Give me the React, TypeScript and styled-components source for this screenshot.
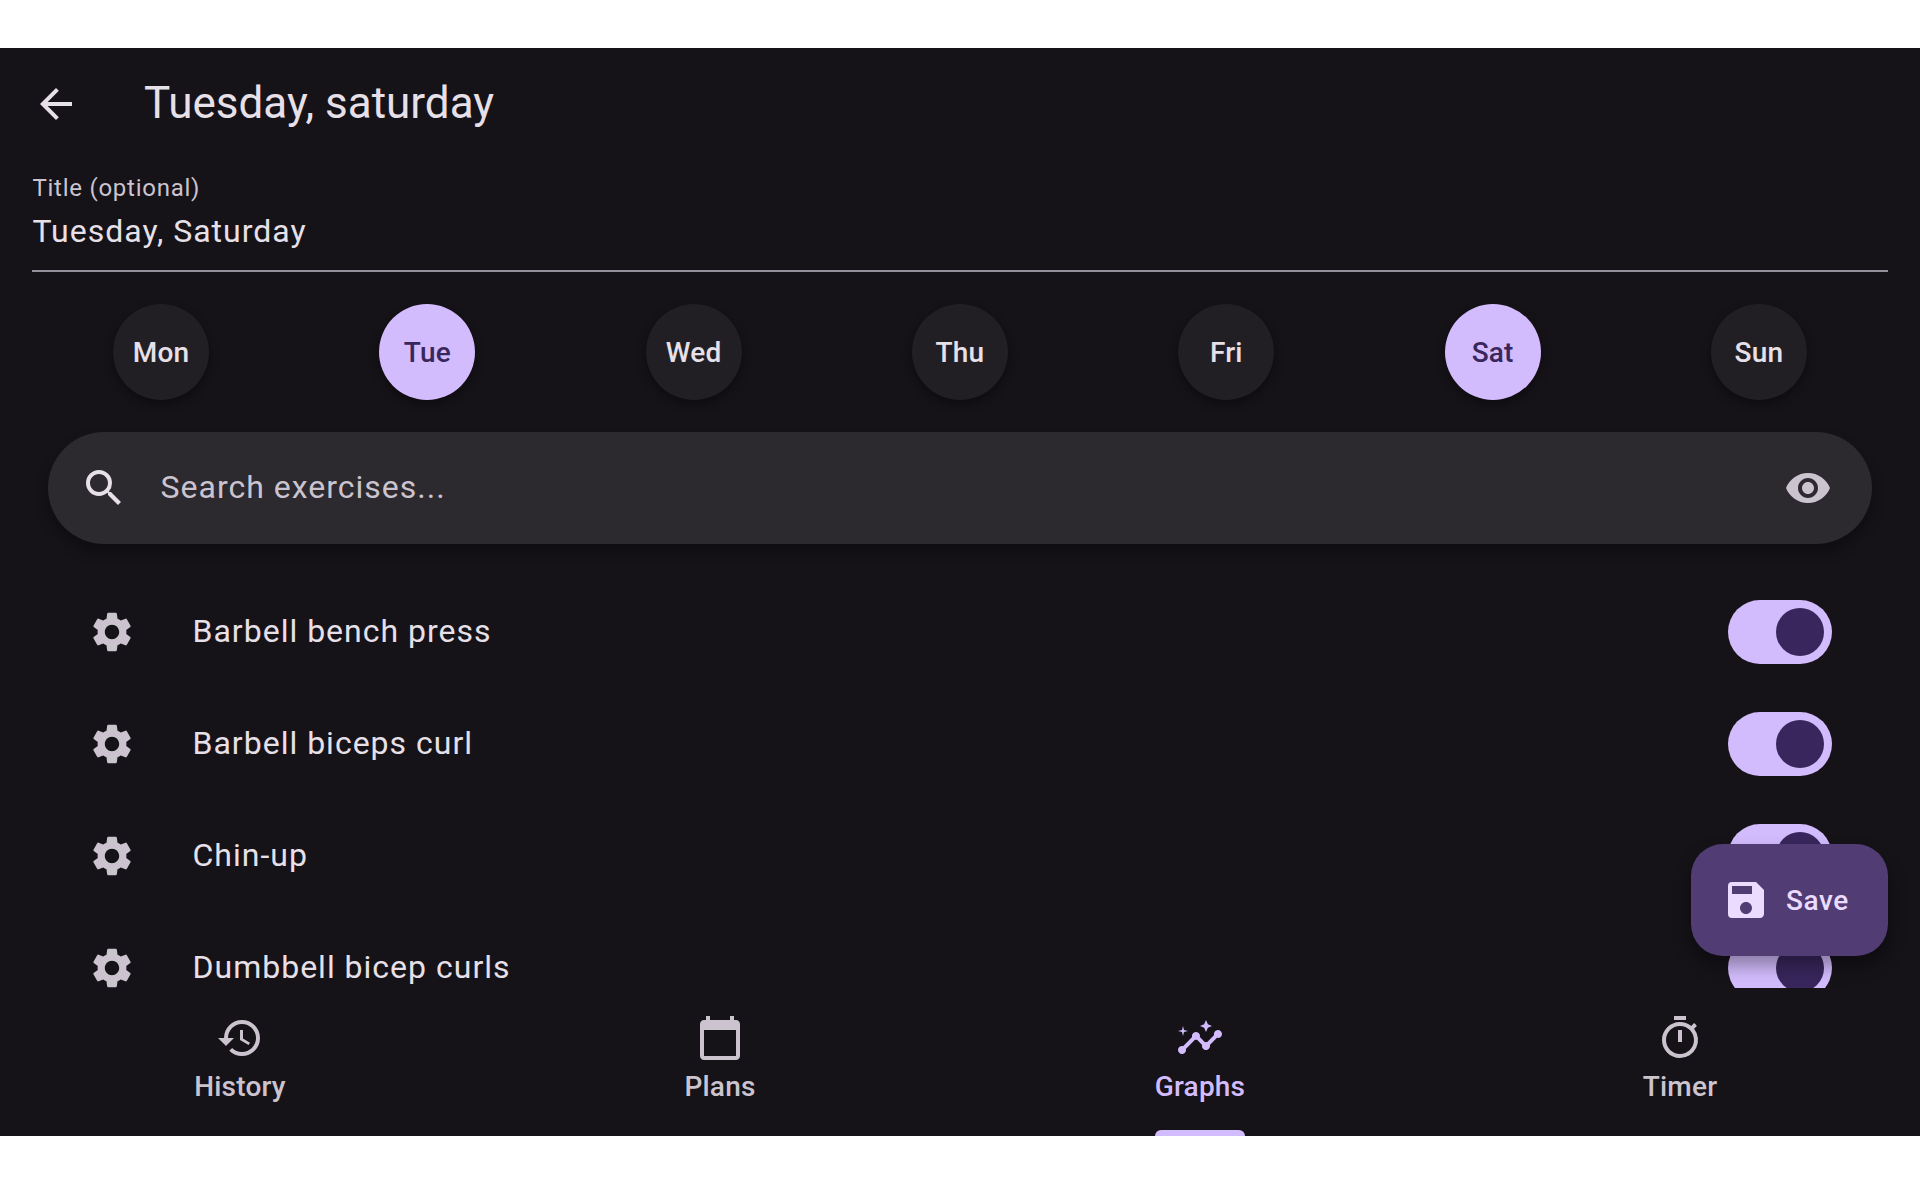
import React from "react";
import styled, { createGlobalStyle, css } from "styled-components";
import {
  MdArrowBack,
  MdCalendarToday,
  MdHistory,
  MdInsights,
  MdOutlineTimer,
  MdSave,
  MdSearch,
  MdSettings,
  MdVisibility,
} from "react-icons/md";

const c = {
  surface: "#151218",
  text: "#e7e0e8",
  muted: "#cbc4cf",
  outline: "#948f99",
  low: "#211f24",
  high: "#2c292f",
  primary: "#d3bcfd",
  onPrimary: "#38265c",
  container: "#513d73",
  onContainer: "#ebdcff",
};

const GlobalStyle = createGlobalStyle`
  * { box-sizing: border-box; }
  body { margin: 0; background: #fff; }
`;

const Page = styled.div`
  height: 1200px;
  padding: 48px 0 64px;
  background: #fff;
  font-family: Roboto, "Liberation Sans", sans-serif;
  color: ${c.text};
`;

const Screen = styled.div`
  display: flex;
  flex-direction: column;
  position: relative;
  height: 1088px;
  background: ${c.surface};
  overflow: hidden;

  svg {
    display: block;
    flex: none;
    width: 48px;
    height: 48px;
  }
`;

const AppBar = styled.header`
  display: flex;
  align-items: center;
  gap: 64px;
  height: 112px;
  padding: 0 32px;
`;

const Heading = styled.h1`
  margin: 0;
  padding-bottom: 2px;
  font-size: 44px;
  line-height: 56px;
  font-weight: 400;
`;

const Field = styled.label`
  display: flex;
  flex-direction: column;
  height: 112px;
  margin: 0 32px;
  padding-top: 14px;
  border-bottom: 2px solid ${c.outline};
`;

const FieldLabel = styled.span`
  padding-left: 0.4px;
  font-size: 24px;
  line-height: 28px;
  letter-spacing: 0.75px;
  color: ${c.muted};
`;

const FieldValue = styled.span`
  margin-top: 5px;
  padding-left: 0.5px;
  font-size: 32px;
  line-height: 48px;
  letter-spacing: 1px;
`;

const Days = styled.div`
  display: flex;
  justify-content: space-between;
  margin-top: 32px;
  padding: 0 113px;
`;

const Day = styled.button<{ $on?: boolean }>`
  width: 96px;
  height: 96px;
  padding: 2px 0 0;
  border: 0;
  border-radius: 50%;
  font: 500 28px/40px Roboto, "Liberation Sans", sans-serif;
  letter-spacing: 0.2px;
  background: ${(p) => (p.$on ? c.primary : c.low)};
  color: ${(p) => (p.$on ? c.onPrimary : c.text)};
  box-shadow: 0 4px 10px rgba(0, 0, 0, 0.34);
`;

const SearchBar = styled.div`
  display: flex;
  flex: none;
  align-items: center;
  height: 112px;
  margin: 32px 48px;
  padding: 0 40px 0 32px;
  border-radius: 56px;
  background: ${c.high};
  box-shadow: 0 8px 14px rgba(0, 0, 0, 0.28);
`;

const Placeholder = styled.span`
  flex: 1;
  margin-left: 32px;
  padding: 0 0 2px 0.5px;
  font-size: 32px;
  line-height: 48px;
  letter-spacing: 1px;
  color: ${c.muted};
`;

const List = styled.div`
  flex: 1;
  min-height: 0;
  overflow: hidden;
`;

const Row = styled.div`
  display: flex;
  align-items: center;
  height: 112px;
  padding: 0 88px;

  svg { color: ${c.muted}; }
`;

const RowText = styled.span`
  flex: 1;
  margin-left: 56px;
  padding: 0 0 2px 0.5px;
  font-size: 32px;
  line-height: 48px;
  letter-spacing: 1px;
`;

const Track = styled.span`
  display: flex;
  justify-content: flex-end;
  width: 104px;
  height: 64px;
  padding: 8px;
  border-radius: 32px;
  background: ${c.primary};
`;

const Thumb = styled.span`
  width: 48px;
  height: 48px;
  border-radius: 50%;
  background: ${c.onPrimary};
`;

const SaveButton = styled.button`
  display: flex;
  align-items: center;
  gap: 16px;
  position: absolute;
  right: 32px;
  bottom: 180px;
  width: 197px;
  height: 112px;
  padding: 0 0 0 31px;
  border: 0;
  border-radius: 32px;
  background: ${c.container};
  color: ${c.onContainer};
  font: 500 28px/40px Roboto, "Liberation Sans", sans-serif;
  letter-spacing: 0.6px;
  box-shadow: 0 10px 18px rgba(0, 0, 0, 0.34);
`;

const SaveLabel = styled.span`
  padding-top: 2px;
`;

const TabBar = styled.nav`
  display: flex;
  position: relative;
  flex: none;
  height: 148px;
  background: ${c.surface};
`;

const Tab = styled.div<{ $active?: boolean }>`
  display: flex;
  flex: 1;
  flex-direction: column;
  align-items: center;
  padding-top: 26px;
  color: ${(p) => (p.$active ? c.primary : c.muted)};
`;

const TabLabel = styled.span<{ $active?: boolean }>`
  height: 74px;
  padding-top: 5px;
  font-size: 28px;
  line-height: 40px;
  font-weight: 500;
  letter-spacing: 0.2px;
  ${(p) =>
    p.$active &&
    css`
      &::after {
        content: "";
        display: block;
        height: 6px;
        margin-top: 23px;
        border-radius: 6px 6px 0 0;
        background: ${c.primary};
      }
    `}
`;

const days = ["Mon", "Tue", "Wed", "Thu", "Fri", "Sat", "Sun"];
const selected = ["Tue", "Sat"];
const exercises = [
  "Barbell bench press",
  "Barbell biceps curl",
  "Chin-up",
  "Dumbbell bicep curls",
];
const tabs = [
  { label: "History", Icon: MdHistory },
  { label: "Plans", Icon: MdCalendarToday },
  { label: "Graphs", Icon: MdInsights, active: true },
  { label: "Timer", Icon: MdOutlineTimer },
];

export default function App() {
  return (
    <Page>
      <GlobalStyle />
      <Screen>
        <AppBar>
          <MdArrowBack />
          <Heading>Tuesday, saturday</Heading>
        </AppBar>
        <Field>
          <FieldLabel>Title (optional)</FieldLabel>
          <FieldValue>Tuesday, Saturday</FieldValue>
        </Field>
        <Days>
          {days.map((d) => (
            <Day key={d} $on={selected.includes(d)}>{d}</Day>
          ))}
        </Days>
        <SearchBar>
          <MdSearch />
          <Placeholder>Search exercises...</Placeholder>
          <MdVisibility color={c.muted} />
        </SearchBar>
        <List>
          {exercises.map((name) => (
            <Row key={name}>
              <MdSettings />
              <RowText>{name}</RowText>
              <Track><Thumb /></Track>
            </Row>
          ))}
        </List>
        <SaveButton>
          <MdSave />
          <SaveLabel>Save</SaveLabel>
        </SaveButton>
        <TabBar>
          {tabs.map(({ label, Icon, active }) => (
            <Tab key={label} $active={active}>
              <Icon />
              <TabLabel $active={active}>{label}</TabLabel>
            </Tab>
          ))}
        </TabBar>
      </Screen>
    </Page>
  );
}
